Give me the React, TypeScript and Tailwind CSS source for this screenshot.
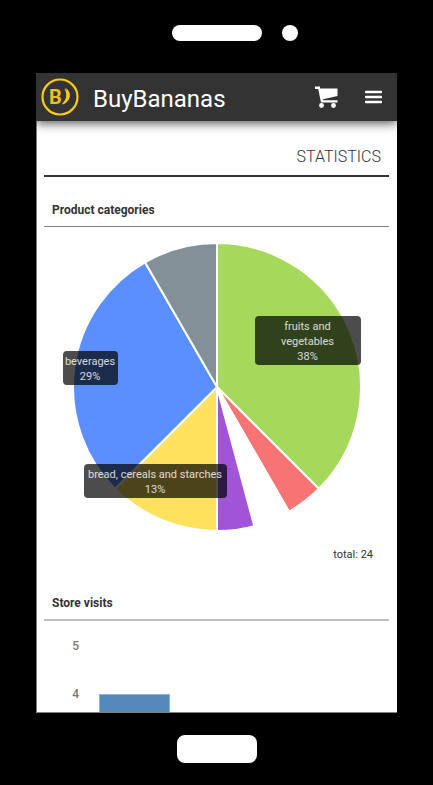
const SLICES = [
  { name: 'fruits and vegetables', count: 9, color: '#a6d95b' },
  { name: 'meat', count: 1, color: '#f87474' },
  { name: 'fish', count: 1, color: '#ffffff' },
  { name: 'dairy', count: 1, color: '#a254d8' },
  { name: 'bread, cereals and starches', count: 3, color: '#ffe15d' },
  { name: 'beverages', count: 7, color: '#5b8fff' },
  { name: 'other', count: 2, color: '#839098' },
];

const TOTAL = SLICES.reduce((sum, s) => sum + s.count, 0);
const CENTER = 145;
const RADIUS = 144;

function point(fraction: number) {
  const angle = fraction * 2 * Math.PI;
  return `${CENTER + RADIUS * Math.sin(angle)} ${CENTER - RADIUS * Math.cos(angle)}`;
}

function Pie() {
  let start = 0;
  return (
    <svg viewBox="0 0 290 290" className="block h-[290px] w-[290px]" role="img" aria-label="Product categories">
      {SLICES.map((s) => {
        const from = start / TOTAL;
        start += s.count;
        return (
          <path
            key={s.name}
            d={`M${CENTER} ${CENTER}L${point(from)}A${RADIUS} ${RADIUS} 0 0 1 ${point(start / TOTAL)}Z`}
            fill={s.color}
            stroke="#fff"
            strokeWidth="2"
          />
        );
      })}
    </svg>
  );
}

function Logo() {
  return (
    <svg viewBox="0 0 38 38" className="h-[38px] w-[38px]" aria-hidden="true">
      <circle cx="19" cy="19" r="17.5" fill="none" stroke="#fcc919" strokeWidth="2.2" />
      <text x="8" y="26" fill="#f0be1b" className="font-['Roboto',sans-serif] text-[20px] font-bold">
        B
      </text>
      <path d="M23.600 11l1.400-.6c3 1.700 4.600 5.200 3.600 9-.8 3-3 5.600-6.600 7.100l-1-.6c2.400-2.400 3.900-4.900 4.200-7.900.2-2.500-.3-4.800-1.600-7z" fill="#fcc919" />
      <path d="M23.600 11l1.400-.6 1.500 1.300-1.900 1.600z" fill="#a3a32a" />
    </svg>
  );
}

function CartIcon() {
  return (
    <svg viewBox="0 0 24 24" className="h-6 w-6" fill="#fff" aria-hidden="true">
      <path d="M0 1.500h5v2h17.500v7.500L8 14.300l.2.900h14.300v2.300H6L3.200 4H0z" />
      <circle cx="6.500" cy="20.500" r="2.400" />
      <circle cx="18.500" cy="20.500" r="2.400" />
    </svg>
  );
}

function MenuIcon() {
  return (
    <svg viewBox="0 0 24 24" className="h-6 w-6" fill="#fff" aria-hidden="true">
      <rect x="4" y="5.700" width="17" height="2.500" rx="0.700" />
      <rect x="4" y="10.700" width="17" height="2.500" rx="0.700" />
      <rect x="4" y="15.700" width="17" height="2.500" rx="0.700" />
    </svg>
  );
}

const LABEL = 'absolute rounded bg-black/70 text-center text-[11px] leading-[15px] text-white/80';

export default function App() {
  return (
    <div className="flex h-screen flex-col bg-black font-['Roboto',sans-serif] text-[#333]">
      <div className="grid h-[73px] shrink-0 grid-cols-[1fr_90px_1fr] items-center gap-5 pb-2">
        <span className="col-start-2 h-4 rounded-full bg-white" />
        <span className="h-4 w-4 rounded-full bg-white" />
      </div>

      <div className="mx-9 flex min-h-0 flex-1 flex-col overflow-hidden bg-white">
        <header className="z-10 flex h-12 shrink-0 items-center bg-[#333] pr-3 pl-[5px] shadow-[0_2px_10px_rgba(0,0,0,0.7)]">
          <Logo />
          <h1 className="ml-3.5 flex-1 pt-1 text-2xl text-white">BuyBananas</h1>
          <button type="button" aria-label="Cart" className="mr-[22px]">
            <CartIcon />
          </button>
          <button type="button" aria-label="Menu">
            <MenuIcon />
          </button>
        </header>

        <main className="min-h-0 flex-1 overflow-hidden border-b border-l border-[#808080] pr-2 pl-[7px]">
          <h2 className="border-b-2 border-[#333] px-2 pt-6 pb-1.5 text-right text-base font-light">STATISTICS</h2>

          <section>
            <h3 className="mt-6 border-b border-[#808080] px-2 pt-px pb-2 text-xs leading-4 font-bold">Product categories</h3>
            <div className="relative mx-auto mt-[15px] w-[290px]">
              <Pie />
              <div className={`${LABEL} top-[74px] left-[183px] w-[106px] px-4 pt-[3px] pb-px`}>
                fruits and vegetables
                <br />
                38%
              </div>
              <div className={`${LABEL} top-[109px] -left-[9px] w-[55px] pt-[3px] pb-px`}>
                beverages
                <br />
                29%
              </div>
              <div className={`${LABEL} top-[222px] left-[12px] w-[143px] pt-[3px] pb-px`}>
                bread, cereals and starches
                <br />
                13%
              </div>
            </div>
            <p className="mt-[15px] pr-4 text-right text-[11px] leading-4">total: {TOTAL}</p>
          </section>

          <section>
            <h3 className="mt-8 border-b-2 border-[#bfbfbf] px-2 pb-2 text-xs leading-4 font-bold">Store visits</h3>
            <div className="mt-[17px] flex">
              <div className="w-[35px] text-right text-xs leading-4 font-medium text-[#777]">
                <div className="h-12">5</div>
                <div className="h-12">4</div>
              </div>
              <div className="mt-14 ml-5 h-48 w-[71px] border border-[#8fb3d6] bg-[#5588bb]" />
            </div>
          </section>
        </main>
      </div>

      <div className="flex h-[72px] shrink-0 justify-center pt-[22px]">
        <button type="button" aria-label="Home" className="h-7 w-20 rounded-lg bg-white" />
      </div>
    </div>
  );
}
